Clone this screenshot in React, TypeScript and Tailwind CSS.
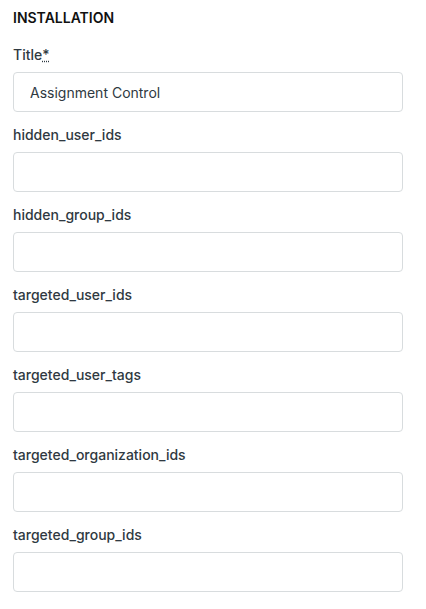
export default function App() {
  const fields = [
    "hidden_user_ids",
    "hidden_group_ids",
    "targeted_user_ids",
    "targeted_user_tags",
    "targeted_organization_ids",
    "targeted_group_ids",
  ]

  return (
    <div
      className="min-h-screen bg-white pl-[13px] pt-[8px] text-[#2f3941]"
      style={{ fontFamily: "Inter, 'Noto Sans', sans-serif" }}
    >
      <h2 className="text-[14px] font-semibold leading-[20px] uppercase text-[#111]">Installation</h2>

      <div className="mt-[17px] w-[390px]">
        <label className="block text-[14px] font-medium leading-[20px]">
          Title
          <abbr title="required" className="underline decoration-dotted">*</abbr>
        </label>
        <input
          className="mt-[7px] block h-[40px] w-full rounded-[4px] border border-[#d8dcde] px-[16px] text-[14px] text-[#2f3941] outline-none"
          defaultValue="Assignment Control"
        />
      </div>

      {fields.map((f) => (
        <div key={f} className="mt-[13px] w-[390px]">
          <label className="block text-[14px] font-medium leading-[20px]">{f}</label>
          <input className="mt-[7px] block h-[40px] w-full rounded-[4px] border border-[#d8dcde] px-[16px] text-[14px] outline-none" />
        </div>
      ))}
    </div>
  )
}
